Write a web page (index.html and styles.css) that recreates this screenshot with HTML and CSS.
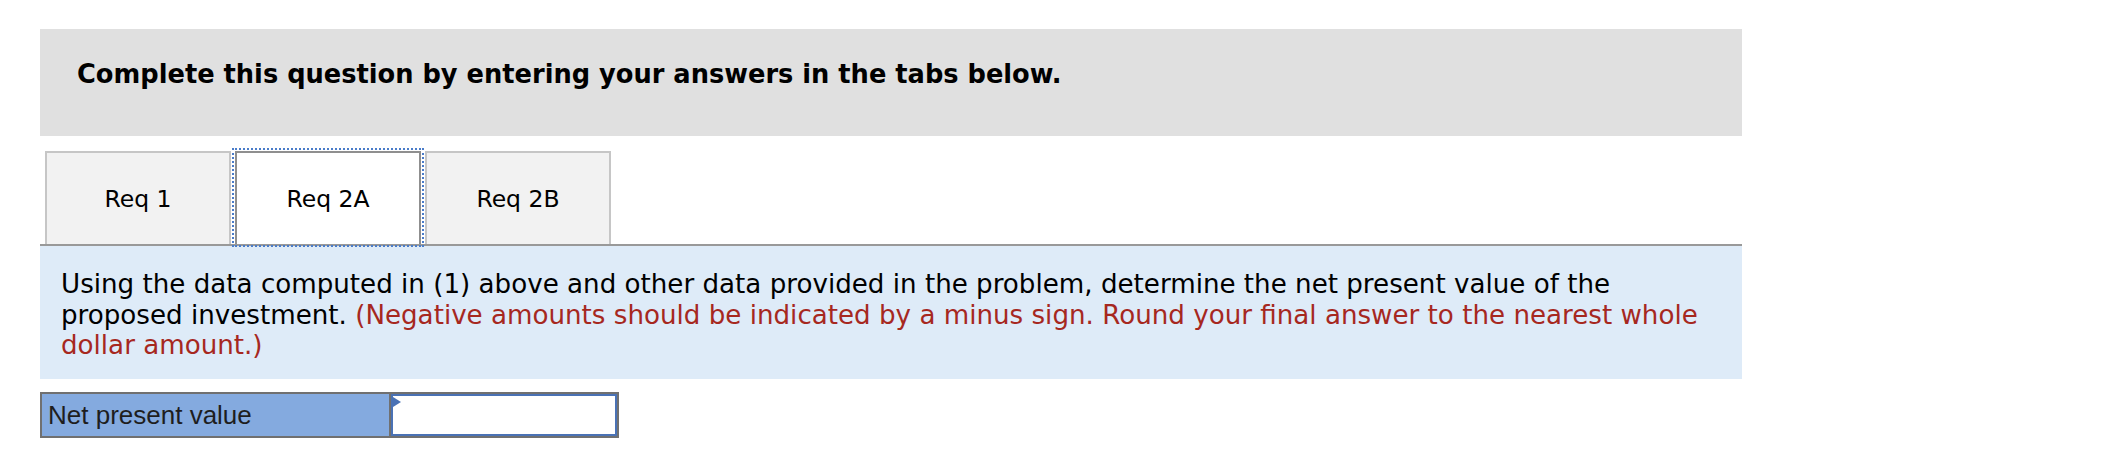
FILE: index.html
```html
<!DOCTYPE html>
<html>
<head>
<meta charset="utf-8">
<link rel="stylesheet" href="styles.css">
</head>
<body>
<div class="page">
  <div class="instructions">
    <span class="instructions-text">Complete this question by entering your answers in the tabs below.</span>
  </div>
  <div class="tabs">
    <div class="tab">Req 1</div>
    <div class="tab tab-active">Req 2A</div>
    <div class="tab">Req 2B</div>
  </div>
  <div class="panel">
    <p class="prompt">Using the data computed in (1) above and other data provided in the problem, determine the net present value of the proposed investment. <span class="hint">(Negative amounts should be indicated by a minus sign. Round your final answer to the nearest whole dollar amount.)</span></p>
  </div>
  <div class="answer-row">
    <div class="answer-label">Net present value</div>
    <div class="answer-input"><span class="marker"></span></div>
  </div>
</div>
</body>
</html>
```

FILE: styles.css
```css
html, body {
  margin: 0;
  padding: 0;
  background: #ffffff;
}

.page {
  padding: 29px 0 0 40px;
  width: 1702px;
}

.instructions {
  height: 107px;
  background: #e0e0e0;
  display: flex;
  align-items: center;
  padding-left: 37px;
  box-sizing: border-box;
}

.instructions-text {
  font-family: "DejaVu Sans", Verdana, sans-serif;
  font-weight: bold;
  font-size: 25.7px;
  color: #000;
  margin-top: -17px;
}

.tabs {
  display: flex;
  margin-top: 15px;
  padding-left: 5px;
  height: 93px;
}

.tab {
  width: 186px;
  margin-right: 4px;
  box-sizing: border-box;
  background: #f2f2f2;
  border: 2px solid #c6c6c6;
  border-bottom: none;
  display: flex;
  align-items: center;
  justify-content: center;
  font-family: "DejaVu Sans", Verdana, sans-serif;
  font-size: 23.5px;
  color: #000;
}

.tab-active {
  background: #ffffff;
  border-color: #8f8f8f;
  outline: 2px dotted #4a7cc9;
  outline-offset: 1px;
  position: relative;
  z-index: 1;
}

.panel {
  background: #deebf8;
  border-top: 2px solid #999999;
  height: 135px;
  box-sizing: border-box;
  padding: 23px 21px 0 21px;
}

.prompt {
  margin: 0;
  font-family: "DejaVu Sans", Verdana, sans-serif;
  font-size: 26.15px;
  line-height: 30.5px;
  color: #000;
}

.hint {
  color: #a6281f;
}

.answer-row {
  display: flex;
  margin-top: 13px;
  width: 579px;
  height: 46px;
  box-sizing: border-box;
  border: 2px solid #707070;
}

.answer-label {
  width: 349px;
  box-sizing: border-box;
  background: #84aadf;
  border-right: 2px solid #707070;
  display: flex;
  align-items: center;
  padding-left: 6px;
  font-family: "Liberation Sans", Arial, sans-serif;
  font-size: 26px;
  color: #1e1e1e;
}

.answer-input {
  flex: 1;
  background: #ffffff;
  border: 2px solid #4a72b5;
  position: relative;
}

.marker {
  position: absolute;
  left: 0;
  top: 1px;
  width: 0;
  height: 0;
  border-top: 5px solid transparent;
  border-bottom: 5px solid transparent;
  border-left: 8px solid #4a72b5;
}
```
